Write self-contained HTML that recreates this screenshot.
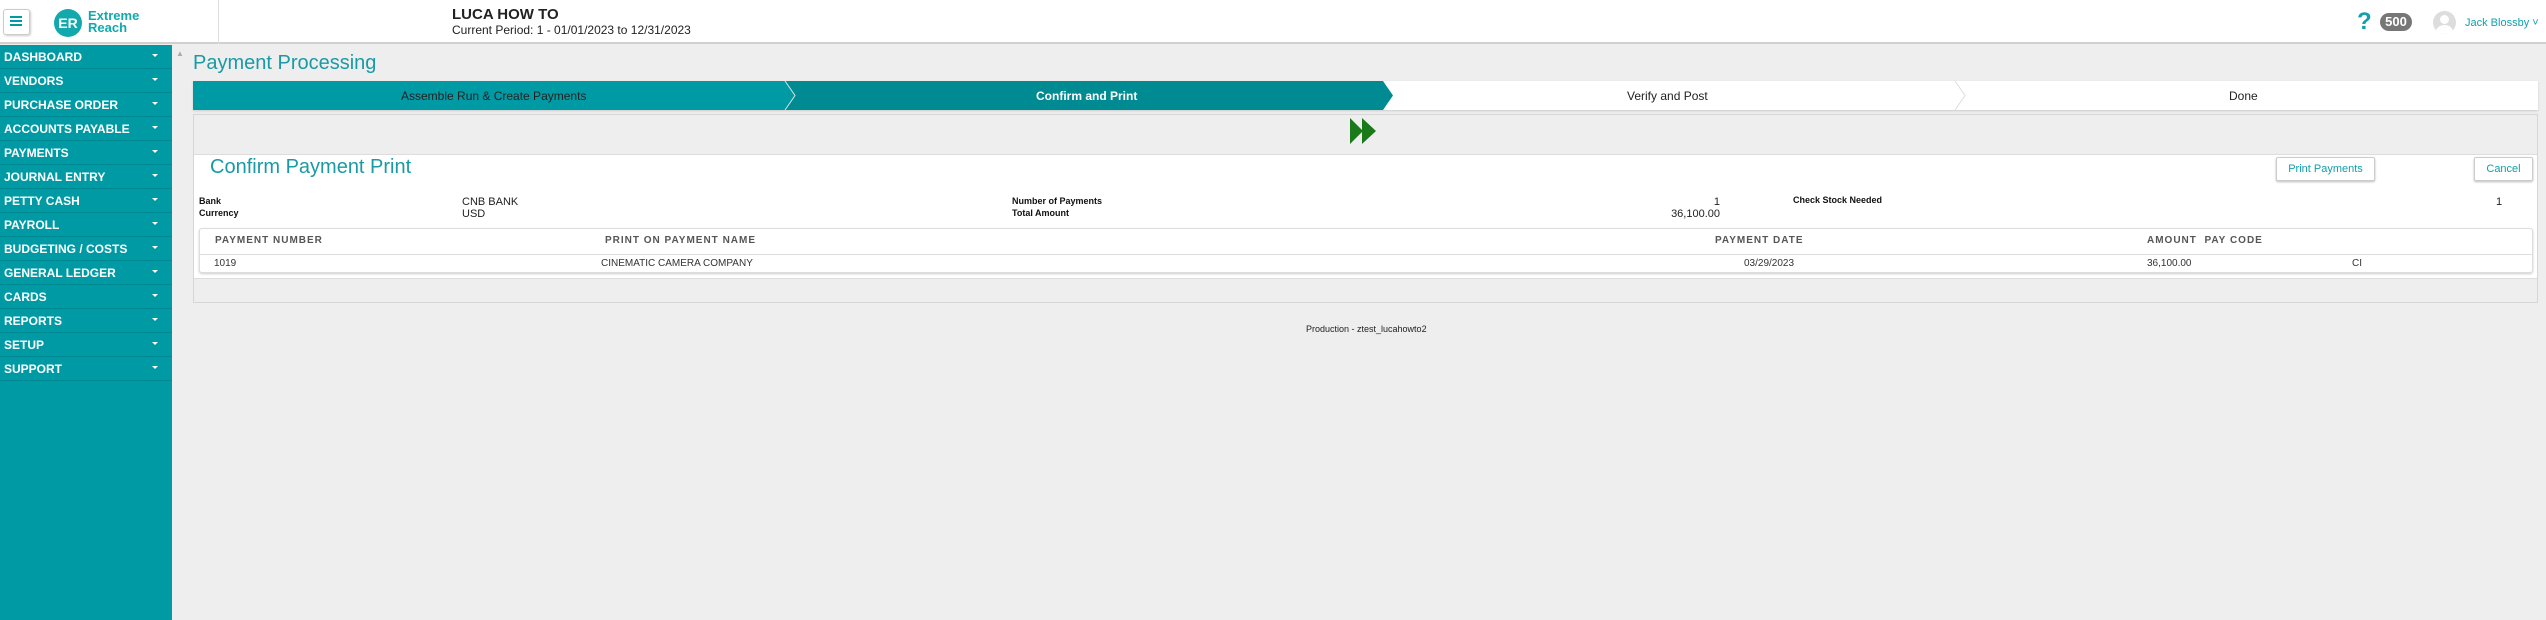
<!DOCTYPE html>
<html><head><meta charset="utf-8"><style>
*{margin:0;padding:0;box-sizing:border-box}
body{width:2546px;height:620px;overflow:hidden;background:#eeeeee;font-family:"Liberation Sans",Arial,sans-serif;position:relative}
.a{position:absolute;white-space:nowrap}
#hdr{position:absolute;left:0;top:0;width:2546px;height:44px;background:#fff;border-bottom:2px solid #d0d0d0}
#side{position:absolute;left:0;top:45px;width:172px;height:575px;background:#009aa5}
.it{height:24px;border-bottom:1px solid #008890;color:#fff;font-weight:bold;font-size:12px;line-height:24px;padding-left:4px;position:relative}
.it:after{content:"";position:absolute;right:14px;top:9px;border-left:3px solid transparent;border-right:3px solid transparent;border-top:3px solid #fff}
.th{font-size:10px;font-weight:bold;color:#555;letter-spacing:1px}
.td{font-size:10px;color:#333}
</style></head><body>
<div id="hdr">
 <div class="a" style="left:3px;top:9px;width:27px;height:26px;border:1px solid #ccc;border-radius:3px;box-shadow:1px 1px 2px #ccc"></div>
 <div class="a" style="left:10px;top:16px;width:12px;height:2px;background:#009aa5;box-shadow:0 4px 0 #009aa5,0 8px 0 #009aa5"></div>
 <div class="a" style="left:54px;top:9px;width:28px;height:28px;border-radius:50%;background:#12a9ad;color:#fff;font-size:14px;font-weight:bold;text-align:center;line-height:28px">ER</div>
 <div class="a" style="left:88px;top:10px;color:#12a9ad;font-size:13px;font-weight:bold;line-height:12px">Extreme<br>Reach</div>
 <div class="a" style="left:218px;top:0;width:1px;height:44px;background:#ddd"></div>
 <div class="a" style="left:452px;top:6px;font-size:15px;font-weight:bold;color:#222">LUCA HOW TO</div>
 <div class="a" style="left:452px;top:23px;font-size:12px;color:#222">Current Period: 1 - 01/01/2023 to 12/31/2023</div>
 <div class="a" style="left:2357px;top:8px;font-size:24px;font-weight:bold;color:#12a0aa">?</div>
 <div class="a" style="left:2380px;top:13px;width:32px;height:18px;border-radius:9px;background:#777;color:#fff;font-size:13px;text-align:center;line-height:18px;font-weight:bold">500</div>
 <div class="a" style="left:2433px;top:11px;width:23px;height:23px;border-radius:50%;background:#ddd;overflow:hidden"><div class="a" style="left:7px;top:4px;width:9px;height:9px;border-radius:50%;background:#fff"></div><div class="a" style="left:3px;top:14px;width:17px;height:14px;border-radius:50%;background:#fff"></div></div>
 <div class="a" style="left:2465px;top:17px;font-size:11px;color:#12a0aa">Jack Blossby ˅</div>
</div>
<div id="side">
<div class="it">DASHBOARD</div><div class="it">VENDORS</div><div class="it">PURCHASE ORDER</div><div class="it">ACCOUNTS PAYABLE</div><div class="it">PAYMENTS</div><div class="it">JOURNAL ENTRY</div><div class="it">PETTY CASH</div><div class="it">PAYROLL</div><div class="it">BUDGETING / COSTS</div><div class="it">GENERAL LEDGER</div><div class="it">CARDS</div><div class="it">REPORTS</div><div class="it">SETUP</div><div class="it">SUPPORT</div>
</div>
<div class="a" style="left:176px;top:49px;font-size:8px;color:#aaa">▲</div>
<div class="a" style="left:193px;top:52px;font-size:20px;color:#1a9aa5">Payment Processing</div>
<div class="a" style="left:193px;top:81px;width:2345px;height:29px;background:#fff;box-shadow:0 1px 2px #ccc"></div>
<svg class="a" style="left:193px;top:81px" width="2345" height="29">
<polygon points="0,0 1190,0 1200,14.5 1190,29 0,29" fill="#008b92"/>
<polygon points="0,0 593,0 603,14.5 593,29 0,29" fill="#009aa5"/>
<polyline points="592,0 602,14.5 592,29" fill="none" stroke="#ddd"/>
<polyline points="1762,0 1772,14.5 1762,29" fill="none" stroke="#ddd"/>
</svg>
<div class="a" style="left:401px;top:89px;font-size:12px;color:#222">Assemble Run &amp; Create Payments</div>
<div class="a" style="left:1036px;top:89px;font-size:12px;color:#fff;font-weight:bold">Confirm and Print</div>
<div class="a" style="left:1627px;top:89px;font-size:12px;color:#222">Verify and Post</div>
<div class="a" style="left:2229px;top:89px;font-size:12px;color:#222">Done</div>
<div class="a" style="left:193px;top:114px;width:2345px;height:189px;border:1px solid #d6d6d6;background:#eeeeee"></div>
<svg class="a" style="left:1350px;top:118px" width="30" height="26"><polygon points="0,0 13,13 0,26" fill="#1a7a1a"/><polygon points="12,0 26,13 12,26" fill="#1a7a1a"/></svg>
<div class="a" style="left:194px;top:154px;width:2343px;height:125px;background:#fff;border-top:1px solid #ddd;border-bottom:1px solid #ddd"></div>
<div class="a" style="left:210px;top:156px;font-size:20px;color:#1a9aa5">Confirm Payment Print</div>
<div class="a" style="left:2276px;top:157px;width:99px;height:24px;border:1px solid #ccc;border-radius:2px;box-shadow:0 1px 2px #bbb;background:#fff;color:#12a0aa;font-size:11px;text-align:center;line-height:22px">Print Payments</div>
<div class="a" style="left:2474px;top:157px;width:59px;height:24px;border:1px solid #ccc;border-radius:2px;box-shadow:0 1px 2px #bbb;background:#fff;color:#12a0aa;font-size:11px;text-align:center;line-height:22px">Cancel</div>
<div class="a" style="left:199px;top:195px;font-size:9px;font-weight:bold;color:#111;line-height:12px">Bank<br>Currency</div>
<div class="a" style="left:462px;top:196px;font-size:11px;color:#222;line-height:12px">CNB BANK<br>USD</div>
<div class="a" style="left:1012px;top:195px;font-size:9px;font-weight:bold;color:#111;line-height:12px">Number of Payments<br>Total Amount</div>
<div class="a" style="left:1620px;top:196px;width:100px;text-align:right;font-size:11px;color:#222;line-height:12px">1<br>36,100.00</div>
<div class="a" style="left:1793px;top:195px;font-size:9px;font-weight:bold;color:#111">Check Stock Needed</div>
<div class="a" style="left:2496px;top:196px;font-size:11px;color:#222">1</div>
<div class="a" style="left:199px;top:228px;width:2334px;height:45px;border:1px solid #ddd;border-radius:3px;box-shadow:0 1px 2px #ccc;background:#fff"></div>
<div class="a" style="left:200px;top:254px;width:2332px;height:1px;background:#ddd"></div>
<div class="a th" style="left:215px;top:235px">PAYMENT NUMBER</div>
<div class="a th" style="left:605px;top:235px">PRINT ON PAYMENT NAME</div>
<div class="a th" style="left:1715px;top:235px">PAYMENT DATE</div>
<div class="a th" style="left:2147px;top:235px">AMOUNT &nbsp;PAY CODE</div>
<div class="a td" style="left:214px;top:258px">1019</div>
<div class="a td" style="left:601px;top:258px">CINEMATIC CAMERA COMPANY</div>
<div class="a td" style="left:1744px;top:258px">03/29/2023</div>
<div class="a td" style="left:2147px;top:258px">36,100.00</div>
<div class="a td" style="left:2352px;top:258px">CI</div>
<div class="a" style="left:1306px;top:324px;font-size:9px;color:#222">Production - ztest_lucahowto2</div>
</body></html>
